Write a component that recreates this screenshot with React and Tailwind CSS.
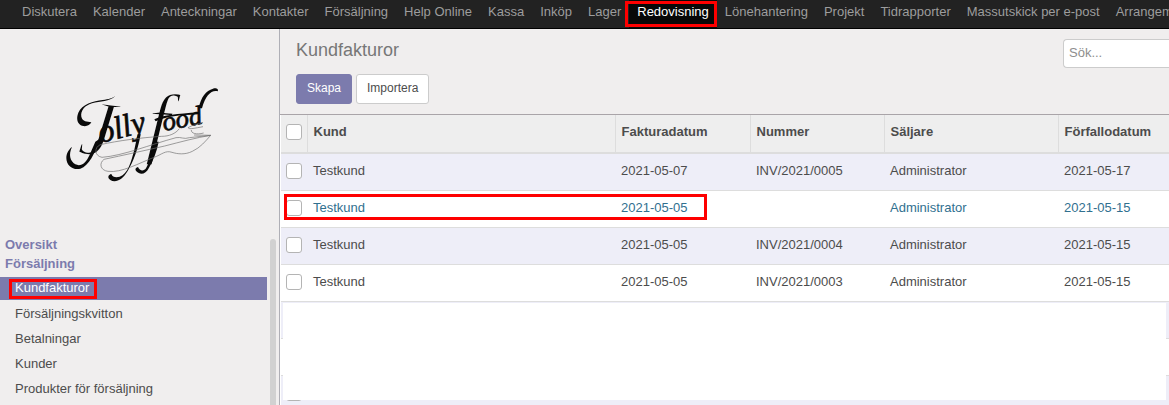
import React from 'react';

const navItems = [
  'Diskutera', 'Kalender', 'Anteckningar', 'Kontakter', 'Försäljning', 'Help Online', 'Kassa', 'Inköp',
  'Lager', 'Redovisning', 'Lönehantering', 'Projekt', 'Tidrapporter', 'Massutskick per e-post', 'Arrangemang',
];

const menuItems = ['Kundfakturor', 'Försäljningskvitton', 'Betalningar', 'Kunder', 'Produkter för försäljning'];

const columns = ['Kund', 'Fakturadatum', 'Nummer', 'Säljare', 'Förfallodatum'];

const invoices = [
  { cells: ['Testkund', '2021-05-07', 'INV/2021/0005', 'Administrator', '2021-05-17'] },
  { cells: ['Testkund', '2021-05-05', '', 'Administrator', '2021-05-15'], draft: true },
  { cells: ['Testkund', '2021-05-05', 'INV/2021/0004', 'Administrator', '2021-05-15'] },
  { cells: ['Testkund', '2021-05-05', 'INV/2021/0003', 'Administrator', '2021-05-15'] },
  { cells: ['', '', '', '', ''] },
  { cells: ['', '', '', '', ''] },
  { cells: ['', '', '', '', ''] },
];

function Highlight({ className }) {
  return <span aria-hidden="true" className={`pointer-events-none absolute border-3 border-[#fe0000] ${className}`} />;
}

function Checkbox({ label }) {
  return (
    <input
      type="checkbox"
      aria-label={label}
      className="block size-4 appearance-none rounded-[3px] border border-[#b4b4b4] bg-white checked:bg-[#7c7bad]"
    />
  );
}

function Logo() {
  return (
    <svg viewBox="0 0 570 360" role="img" aria-label="Jolly food" className="h-[120px] w-[190px]">
      <g fill="#0a0a0a" fontFamily="'Liberation Serif', serif" fontStyle="italic">
        <text fontSize="240" stroke="#f0eeee" strokeWidth="6" transform="translate(80 234) rotate(7)">J</text>
        <text fontSize="96" stroke="#0a0a0a" strokeWidth="2" transform="translate(152 204) rotate(-14)">olly</text>
        <text fontSize="240" stroke="#f0eeee" strokeWidth="5" transform="translate(288 218) rotate(4)">f</text>
        <text fontSize="80" stroke="#0a0a0a" strokeWidth="2" transform="translate(342 168) rotate(-11)">ood</text>
      </g>
      {/* calligraphic flourishes */}
      <g fill="#0a0a0a">
        <path d="M196 64C178 79 151 79 126 85C104 91 91 108 94 125C98 141 111 139 124 142C120 151 108 156 96 152C82 147 78 131 85 113C96 88 130 78 158 75C177 73 187 69 196 64Z" />
        <path d="M66 216C55 239 60 258 76 268C93 276 108 264 119 239L136 200L148 192C135 236 117 272 91 281C70 287 49 272 49 249C49 235 57 222 66 216Z" />
        <path d="M272 178C266 216 250 262 233 288C217 315 196 325 181 315C171 308 175 299 184 297C187 307 199 308 209 305C234 296 243 261 253 224L263 178Z" />
        <path d="M326 200C320 230 311 254 297 278C287 298 271 301 259 289C254 283 256 278 264 276C269 288 281 290 288 280C300 257 308 225 314 200Z" />
        <path d="M446 100C453 65 468 47 489 41C499 38 507 43 503 49C485 44 466 61 456 100Z" />
        <path d="M313 133C342 119 380 117 446 112L445 118C386 121 350 124 317 139Z" />
      </g>
      <g fill="none" stroke="#6f6f6f" strokeWidth="2">
        <path d="M388 161C377 176 357 184 335 184C273 188 205 197 151 209C132 217 133 243 156 247C220 242 300 209 378 188C393 185 402 194 418 188L482 181C467 198 451 218 427 229C405 240 382 237 366 232C346 225 335 239 312 247C266 265 215 294 174 289C150 286 147 264 162 253C218 241 287 226 344 213C391 201 438 188 482 181" />
        <path d="M414 158C431 147 444 150 459 142M415 158C414 164 433 160 459 155M424 165C423 175 439 180 461 174M432 180C453 181 467 180 482 181" />
      </g>
    </svg>
  );
}

export default function App() {
  return (
    <div className="flex h-screen flex-col overflow-hidden bg-[#f0eeee] font-['Liberation_Sans',Arial,sans-serif] text-[13px] text-[#4c4c4c]">
      <nav className="h-[29px] shrink-0 overflow-hidden border-b border-black bg-[#222222]">
        <ul className="flex h-full pl-3.5">
          {navItems.map((item) => {
            const active = item === 'Redovisning';
            return (
              <li key={item} className="relative">
                <a
                  href="#"
                  aria-current={active ? 'page' : undefined}
                  className={`flex h-full items-center px-2 pb-1 whitespace-nowrap ${active ? 'bg-[#080808] text-white' : 'text-[#9d9d9d]'}`}
                >
                  {item}
                </a>
                {active && <Highlight className="top-px right-0 bottom-px -left-1" />}
              </li>
            );
          })}
        </ul>
      </nav>

      <div className="flex min-h-0 flex-1">
        <aside className="flex w-[280px] shrink-0 flex-col border-r border-[#afafb6]">
          <a href="#" className="flex h-[206px] shrink-0 items-start pt-[46px] pl-[50px]">
            <Logo />
          </a>
          <div className="flex min-h-0 flex-1">
            <div className="w-[267px]">
              <h2 className="pl-[5px] leading-[19px] font-bold text-[#7c7bad]">Oversikt</h2>
              <h2 className="pl-[5px] leading-[19px] font-bold text-[#7c7bad]">Försäljning</h2>
              <ul className="flex flex-col gap-0.5 pt-1">
                {menuItems.map((item, i) => (
                  <li key={item} className="relative">
                    <a
                      href="#"
                      aria-current={i === 0 ? 'page' : undefined}
                      className={`block h-[23px] pl-[15px] ${i === 0 ? 'bg-[#7c7bad] leading-[22px] text-white' : 'leading-6'}`}
                    >
                      {item}
                    </a>
                    {i === 0 && <Highlight className="top-0.5 bottom-px left-[9px] w-[88px]" />}
                  </li>
                ))}
              </ul>
            </div>
            <div className="mt-1 ml-[3px] w-1.5 rounded-t-full bg-[#d1d1d1]" />
          </div>
        </aside>

        <main className="flex min-w-0 flex-1 flex-col bg-white">
          <header className="flex h-[86px] shrink-0 justify-between border-b border-[#a9a4a8] bg-[#f0eeee] pl-4">
            <div className="pt-2.5">
              <h1 className="text-[18px] leading-[22px] text-[#777777]">Kundfakturor</h1>
              <div className="flex gap-1 pt-[13px] text-[12px]">
                <button type="button" className="h-[30px] rounded-[3px] border border-[#7c7bad] bg-[#7c7bad] px-2.5 pb-0.5 text-white">
                  Skapa
                </button>
                <button type="button" className="h-[30px] rounded-[3px] border border-[#cccccc] bg-white px-2.5 pb-0.5">
                  Importera
                </button>
              </div>
            </div>
            <input
              type="search"
              aria-label="Sök"
              placeholder="Sök..."
              className="mt-2.5 h-[29px] w-[106px] rounded-l-[4px] border border-r-0 border-[#cccccc] bg-white px-[5px] pb-0.5 placeholder:text-[#8e8e8e]"
            />
          </header>

          <div className="relative pl-px">
            <table className="w-full table-fixed border-collapse text-left">
              <colgroup>
                <col className="w-[26px]" />
                <col />
                <col className="w-[135px]" />
                <col className="w-[134px]" />
                <col className="w-[174px]" />
                <col className="w-[111px]" />
              </colgroup>
              <thead className="bg-[#eeeeee]">
                <tr className="h-[38px] border-b-2 border-[#dddddd]">
                  <th className="border-r border-[#dddddd] pb-1 pl-[5px]">
                    <Checkbox label="Markera alla" />
                  </th>
                  {columns.map((name) => (
                    <th key={name} className="border-r border-[#dddddd] pb-1 pl-1.5 last:border-r-0">
                      {name}
                    </th>
                  ))}
                </tr>
              </thead>
              <tbody>
                {invoices.map((row, i) => (
                  <tr
                    key={i}
                    className={`h-[37px] border-b border-[#dddddd] odd:bg-[#eeeef8] ${row.draft ? 'text-[#31708f]' : ''}`}
                  >
                    <td className="pb-0.5 pl-[5px]">
                      <Checkbox label={`Markera rad ${i + 1}`} />
                    </td>
                    {row.cells.map((cell, j) => (
                      <td key={j} className="pb-0.5 pl-1.5">
                        {cell}
                      </td>
                    ))}
                  </tr>
                ))}
              </tbody>
            </table>
            <Highlight className="top-[79px] left-1 h-[26px] w-[423px]" />
            <div className="absolute top-[188px] right-[3px] left-[3px] h-[97px] bg-white" />
          </div>
        </main>
      </div>
    </div>
  );
}
